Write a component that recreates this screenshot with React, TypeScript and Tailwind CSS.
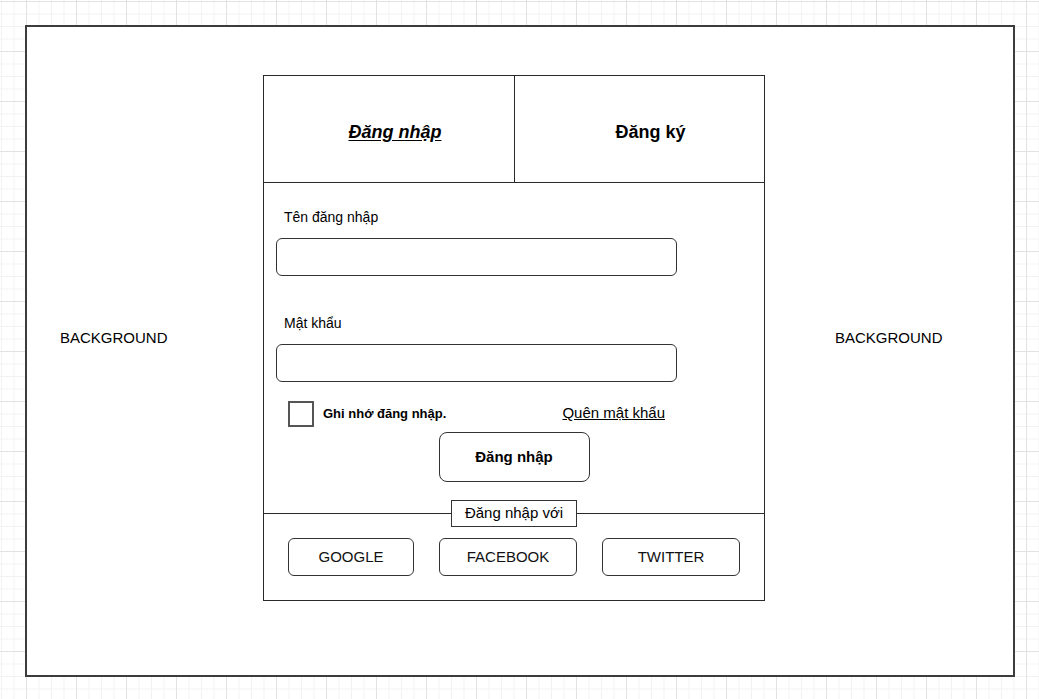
import React from 'react'

const gridBg =
    'bg-white bg-[linear-gradient(to_right,#e2e2e2_1px,transparent_1px),linear-gradient(to_bottom,#e2e2e2_1px,transparent_1px),linear-gradient(to_right,#f2f2f2_1px,transparent_1px),linear-gradient(to_bottom,#f2f2f2_1px,transparent_1px)] bg-[size:50px_50px,50px_50px,12.5px_12.5px,12.5px_12.5px] bg-[position:26px_1px,26px_1px,1px_1px,1px_1px]'

function SocialButton({ label, width }: { label: string; width: string }) {
    return (
        <button className={`${width} h-[38px] rounded-[6px] border border-[#333] bg-white text-[15px] text-[#111]`}>
            {label}
        </button>
    )
}

function LoginCard() {
    return (
        <div className="w-[502px] border border-[#2a2a2a] bg-white flex flex-col">
            {/* Tabs */}
            <div className="flex h-[107px] border-b border-[#2a2a2a]">
                <div className="w-[251px] border-r border-[#2a2a2a] flex items-center justify-center pl-[12px] pt-[6px]">
                    <span className="text-[18px] font-bold italic underline underline-offset-2 text-black">Đăng nhập</span>
                </div>
                <div className="flex-1 flex items-center justify-center pl-[22px] pt-[6px]">
                    <span className="text-[18px] font-bold text-black">Đăng ký</span>
                </div>
            </div>

            {/* Form */}
            <div className="flex flex-col px-[12px] pt-[26px] pb-[31px]">
                <label className="pl-[8px] text-[14px] leading-[16px] text-black">Tên đăng nhập</label>
                <input className="mt-[13px] w-[401px] h-[38px] rounded-[6px] border border-[#333] outline-none" />

                <label className="mt-[39px] pl-[8px] text-[14px] leading-[16px] text-black">Mật khẩu</label>
                <input type="password" className="mt-[13px] w-[401px] h-[38px] rounded-[6px] border border-[#333] outline-none" />

                <div className="mt-[18px] w-[401px] h-[26px] flex items-center pl-[12px] pr-[12px] pt-[1px]">
                    <span className="w-[26px] h-[26px] border-2 border-[#555] bg-white" />
                    <span className="ml-[9px] text-[13px] font-bold text-black">Ghi nhớ đăng nhập.</span>
                    <a className="ml-auto text-[15px] underline text-black">Quên mật khẩu</a>
                </div>

                <div className="mt-[6px] flex justify-center">
                    <button className="w-[151px] h-[50px] rounded-[8px] border border-[#333] bg-white text-[15px] font-bold text-black">
                        Đăng nhập
                    </button>
                </div>
            </div>

            {/* Social */}
            <div className="relative border-t border-[#2a2a2a] px-[24px] pt-[24px] pb-[24px] flex justify-between">
                <span className="absolute left-1/2 -translate-x-1/2 -top-[14px] h-[27px] w-[126px] border border-[#333] bg-white flex items-center justify-center text-[15px] text-black">
                    Đăng nhập với
                </span>
                <SocialButton label="GOOGLE" width="w-[126px]" />
                <SocialButton label="FACEBOOK" width="w-[138px]" />
                <SocialButton label="TWITTER" width="w-[138px]" />
            </div>
        </div>
    )
}

export default function App() {
    return (
        <div className={`w-[1039px] h-[699px] pl-[25px] pt-[25px] ${gridBg}`} style={{ fontFamily: '"Liberation Sans", Arial, sans-serif' }}>
            <div className="w-[990px] h-[652px] border-2 border-[#3c3c3c] bg-white pt-[48px]">
                <div className="flex items-center">
                    <div className="w-[236px] pl-[33px] text-[15px] text-black">BACKGROUND</div>
                    <LoginCard />
                    <div className="pl-[70px] text-[15px] text-black">BACKGROUND</div>
                </div>
            </div>
        </div>
    )
}
